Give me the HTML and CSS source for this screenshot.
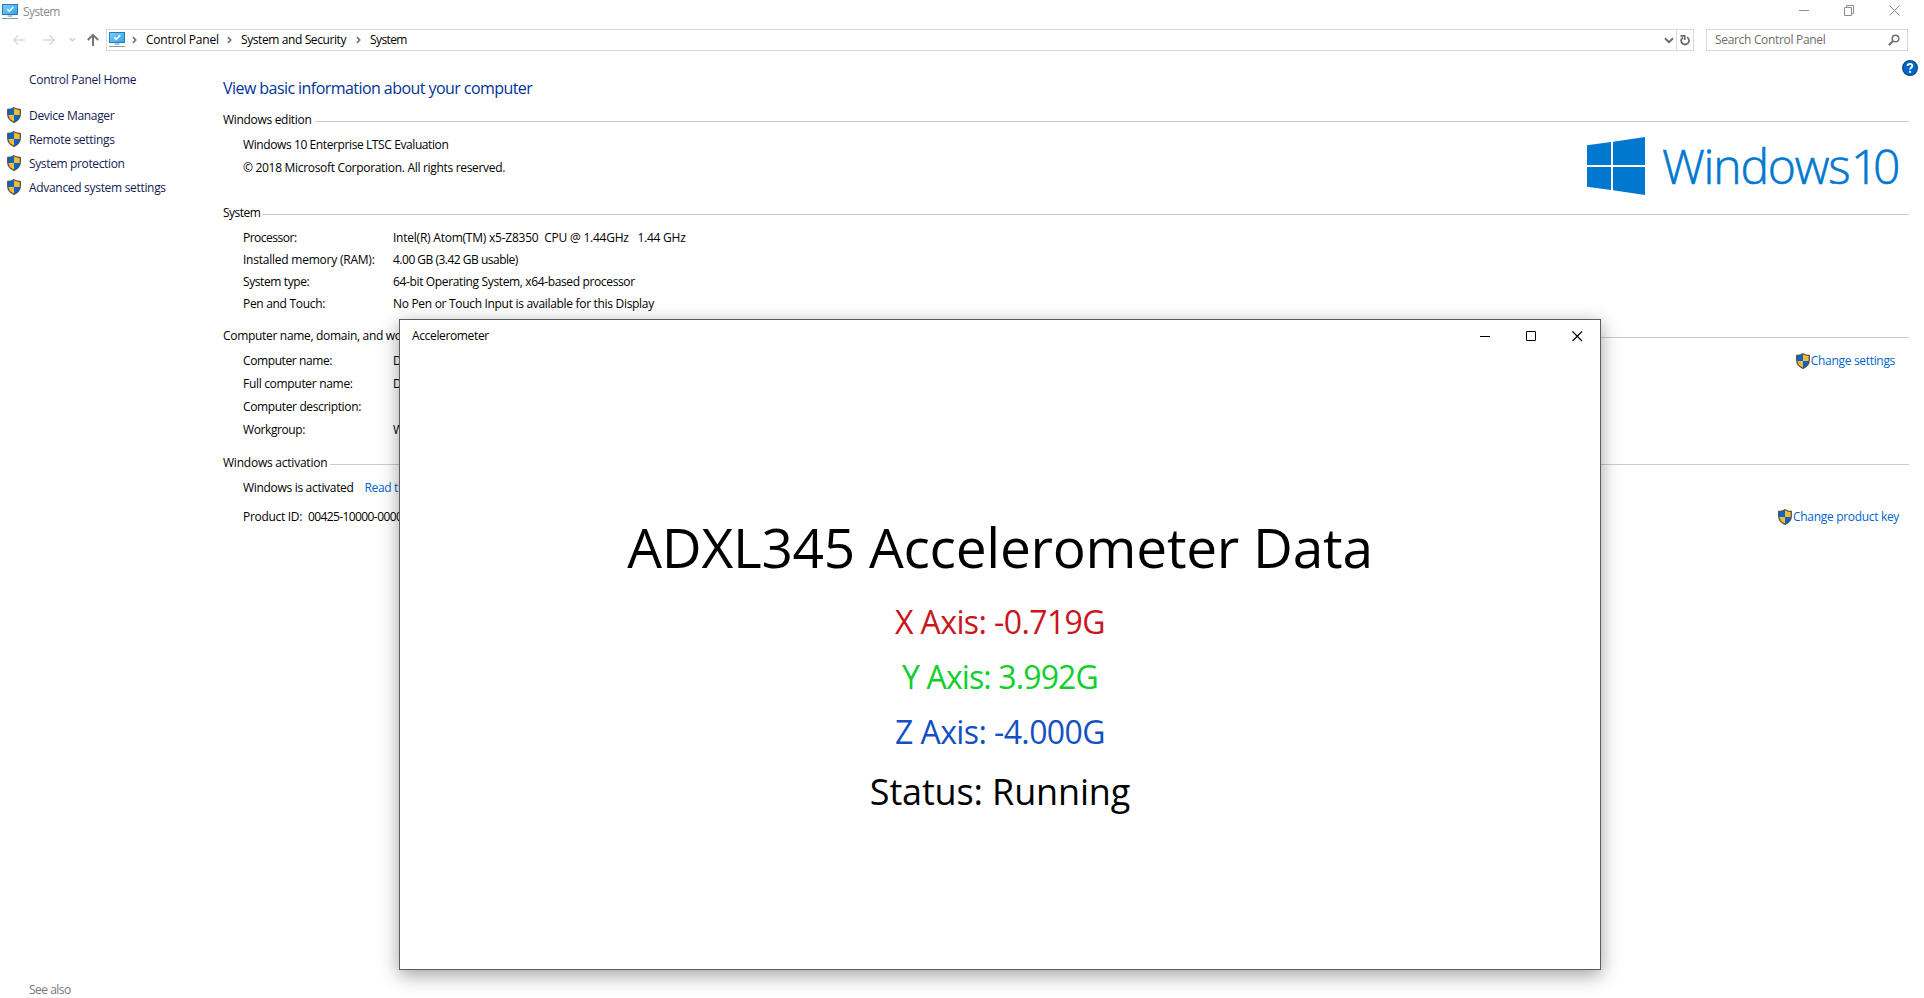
FILE: index.html
```html
<!DOCTYPE html>
<html lang="en">
<head>
<meta charset="utf-8">
<title>System</title>
<link rel="stylesheet" href="styles.css">
</head>
<body>
<svg class="defs" width="0" height="0" aria-hidden="true">
  <linearGradient id="sky" x1="0" y1="0" x2="1" y2="1"><stop offset="0" stop-color="#7fd0fb"/><stop offset="1" stop-color="#2aa3f0"/></linearGradient>
  <symbol id="monitor" viewBox="0 0 16 16">
    <rect x="0.5" y="0.5" width="15" height="10" fill="url(#sky)" stroke="#2a7bb8"/>
    <path d="M5.3 5.2l2 2.1 4-4.3" fill="none" stroke="#fff" stroke-width="1.5"/>
    <path d="M5.5 12h5M0 14.5h16" fill="none" stroke="#8799a8"/>
    <path d="M6 11h4v2H6z" fill="#b4c3cf"/>
  </symbol>
  <symbol id="shield" viewBox="0 0 14 16">
    <path d="M7 .6C5.2 1.900 3 2.400.7 2.500V7c0 4 2.300 6.700 6.300 8.500C11 13.700 13.300 11 13.300 7V2.500C11 2.400 8.800 1.900 7 .6z" fill="#ffb92e"/>
    <path d="M7 .6C5.200 1.900 3 2.400.7 2.500V8H7z" fill="#0067cc"/>
    <path d="M7 8h6.200c-.3 3.500-2.500 5.800-6.200 7.500z" fill="#0067cc"/>
    <path d="M7 .7C5.200 1.900 3 2.400.7 2.500V7c0 4 2.300 6.700 6.300 8.400C11 13.700 13.300 11 13.300 7V2.500C11 2.400 8.800 1.900 7 .7z" fill="none" stroke="#55544f" stroke-width="1.300"/>
  </symbol>
  <symbol id="sep" viewBox="0 0 5 8"><path d="M.8 1l3 3-3 3" fill="none" stroke="#6a6a6a" stroke-width="1.500"/></symbol>
</svg>

<div class="system">
  <header class="titlebar">
    <svg class="app-icon"><use href="#monitor"/></svg>
    <span class="title ls-6">System</span>
    <svg class="caption" width="101" height="11" viewBox="0 0 101 11" fill="none" stroke="#8e8e8e">
      <path d="M0 5.500h10M45.500 2.500h7v8h-7zM47.500 2.500v-2h7v8h-2"/>
      <path d="M90.500.5l10 10M100.500.5l-10 10"/>
    </svg>
  </header>

  <nav class="navbar">
    <svg class="nav-icons" width="88" height="14" viewBox="0 0 88 14" fill="none">
      <path d="M13 7H1.500M6.300 2.200L1.500 7l4.800 4.800M31 7h11.300M37.500 2.200L42.300 7l-4.800 4.800" stroke="#dcdcdc" stroke-width="1.500"/>
      <path d="M57.700 5l2.800 2.800L63.300 5" stroke="#d0d0d0" stroke-width="1.500"/>
      <path d="M81 13V1.800M75.800 7L81 1.800 86.200 7" stroke="#757575" stroke-width="2"/>
    </svg>
    <div class="address">
      <svg class="addr-icon"><use href="#monitor"/></svg>
      <svg class="sep"><use href="#sep"/></svg>
      <span class="crumb crumb-a ls-2">Control Panel</span>
      <svg class="sep"><use href="#sep"/></svg>
      <span class="crumb crumb-b ls-4">System and Security</span>
      <svg class="sep"><use href="#sep"/></svg>
      <span class="crumb ls-6">System</span>
      <svg class="drop" width="10" height="7" viewBox="0 0 10 7"><path d="M1 1.300l4 3.900 4-3.900" fill="none" stroke="#6c6c6c" stroke-width="2"/></svg>
      <span class="refresh"><svg width="10" height="12" viewBox="0 0 10 12"><path d="M7 3.200A3.900 3.900 0 1 1 2.800 3.400" fill="none" stroke="#6c6c6c" stroke-width="1.800"/><path d="M.5 1.900h4.200V6" fill="none" stroke="#6c6c6c" stroke-width="1.800"/></svg></span>
    </div>
    <div class="search">
      <span>Search Control Panel</span>
      <svg width="12" height="12" viewBox="0 0 12 12" fill="none" stroke="#707070"><circle cx="7.500" cy="4.500" r="3.300" stroke-width="1.500"/><path d="M5 7L.8 11.200" stroke-width="2"/></svg>
    </div>
  </nav>

  <div class="body">
    <aside class="side">
      <a class="home ls-3">Control Panel Home</a>
      <a class="task ls-3"><svg class="shield"><use href="#shield"/></svg>Device Manager</a>
      <a class="task ls-3"><svg class="shield"><use href="#shield"/></svg>Remote settings</a>
      <a class="task"><svg class="shield"><use href="#shield"/></svg>System protection</a>
      <a class="task ls-3"><svg class="shield"><use href="#shield"/></svg>Advanced system settings</a>
      <span class="see ls-5">See also</span>
    </aside>

    <main class="main">
      <h1>View basic information about your computer</h1>
      <section>
        <h2 class="ls-3">Windows edition</h2>
        <div class="edition">
          <div class="edition-text">
            <p class="ls-4">Windows 10 Enterprise LTSC Evaluation</p>
            <p class="ls-3">© 2018 Microsoft Corporation. All rights reserved.</p>
          </div>
          <div class="brand">
            <svg width="58" height="58" viewBox="0 0 58 58" fill="#0078d0"><path d="M0 8.200L24 5v23H0zM26 4.700L58 0v28H26zM0 30h24v23L0 49.800zM26 30h32v28l-32-4.700z"/></svg>
            <span class="brand-name">Windows</span><span class="brand-num">10</span>
          </div>
        </div>
      </section>
      <section>
        <h2 class="ls-5">System</h2>
        <dl class="rows tight">
          <dt class="ls-5">Processor:</dt><dd class="ls-2">Intel(R) Atom(TM) x5-Z8350&nbsp; CPU @ 1.44GHz &nbsp; 1.44 GHz</dd>
          <dt class="ls-2">Installed memory (RAM):</dt><dd class="ls-5">4.00 GB (3.42 GB usable)</dd>
          <dt class="ls-4">System type:</dt><dd>64-bit Operating System, x64-based processor</dd>
          <dt class="ls-3">Pen and Touch:</dt><dd class="ls-3">No Pen or Touch Input is available for this Display</dd>
        </dl>
      </section>
      <section>
        <h2 class="ls-3">Computer name, domain, and wo</h2>
        <div class="split">
          <dl class="rows">
            <dt class="ls-4">Computer name:</dt><dd>D</dd>
            <dt class="ls-3">Full computer name:</dt><dd>D</dd>
            <dt>Computer description:</dt><dd></dd>
            <dt class="ls-4">Workgroup:</dt><dd>W</dd>
          </dl>
          <a class="link change-settings"><svg class="shield"><use href="#shield"/></svg>Change settings</a>
        </div>
      </section>
      <section>
        <h2 class="ls-2">Windows activation</h2>
        <div class="activation"><span class="ls-3">Windows is activated</span><a class="link">Read th</a></div>
        <div class="product"><span class="ls-3">Product ID:</span><span class="pid">00425-10000-0000</span>
          <a class="link change-key"><svg class="shield"><use href="#shield"/></svg>Change product key</a></div>
      </section>
    </main>
  </div>
</div>

<svg class="help" width="16" height="16" viewBox="0 0 16 16"><circle cx="8" cy="8" r="7.400" fill="#0067cc" stroke="#0a4a8c" stroke-width="1.200"/><path d="M5.600 6C5.600 3.200 10.300 3.300 10.300 5.800 10.300 7.500 8.100 7.500 8.100 9.600" fill="none" stroke="#fff" stroke-width="1.900"/><path d="M7.100 10.800h2v2h-2z" fill="#fff"/></svg>

<div class="app">
  <div class="app-bar">
    <span>Accelerometer</span>
    <svg width="103" height="11" viewBox="0 0 103 11" fill="none" stroke="#000"><path d="M0 5.500h10M46.500.5h9v9h-9z"/><path d="M92.500.5l9.500 9.500M102 .5L92.500 10" stroke-width="1.100"/></svg>
  </div>
  <div class="readout">
    <div class="heading">ADXL345 Accelerometer Data</div>
    <div class="axis x">X Axis: -0.719G</div>
    <div class="axis y">Y Axis: 3.992G</div>
    <div class="axis z">Z Axis: -4.000G</div>
    <div class="status">Status: Running</div>
  </div>
</div>
</body>
</html>
```

FILE: styles.css
```css
* { box-sizing: border-box; }
html, body { height: 100%; }
body {
  margin: 0;
  overflow: hidden;
  background: #fff;
  color: #000;
  font: 12px/23px "Open Sans", "Noto Sans", sans-serif;
  letter-spacing: -0.36px;
}
h1, h2, p, dl, dd { margin: 0; font-weight: 400; }
svg { flex: none; display: block; }
span, a, p, dt, dd, h1, h2 { white-space: nowrap; }
.defs { position: absolute; }

.ls-2 { letter-spacing: -0.23px; }
.ls-3 { letter-spacing: -0.31px; }
.ls-4 { letter-spacing: -0.4px; }
.ls-5 { letter-spacing: -0.5px; }
.ls-6 { letter-spacing: -0.6px; }

.system { display: flex; flex-direction: column; height: 100%; }

.titlebar { display: flex; align-items: flex-start; height: 29px; padding: 0 24px 0 2px; }
.app-icon { width: 16px; height: 16px; margin-top: 4px; }
.title { margin-left: 5px; color: #8c8c8c; }
.caption { margin: 5px 0 0 auto; }

.navbar { display: flex; align-items: center; height: 22px; padding-left: 12px; }
.nav-icons { margin-right: 6px; }
.address {
  display: flex;
  align-items: center;
  width: 1588px;
  height: 22px;
  padding-left: 2px;
  border: 1px solid #d9d9d9;
}
.addr-icon { width: 16px; height: 16px; }
.sep { width: 5px; height: 8px; margin: 0 9px 0 7px; }
.crumb { line-height: 20px; }
.crumb + .sep { margin-left: 9px; margin-right: 9px; }
.crumb-a { width: 72px; }
.crumb-b { width: 106px; }
.drop { margin-left: auto; margin-right: 2px; }
.refresh {
  display: flex;
  align-items: center;
  justify-content: center;
  width: 17px;
  height: 20px;
  border-left: 1px solid #d9d9d9;
}
.search {
  display: flex;
  align-items: center;
  justify-content: space-between;
  width: 202px;
  height: 22px;
  margin-left: 12px;
  padding: 0 7px 0 8px;
  border: 1px solid #d9d9d9;
  color: #6d6d6d;
  line-height: 20px;
  letter-spacing: -0.32px;
}

.body { display: flex; flex: 1; min-height: 0; }
.side {
  display: flex;
  flex-direction: column;
  width: 223px;
  padding: 17px 0 0 29px;
  color: #151c55;
}
.home { margin-bottom: 12px; }
.task { display: flex; align-items: center; height: 24px; margin-left: -22px; }
.task .shield { margin-right: 8px; }
.shield { width: 14px; height: 16px; }
.see { margin-top: auto; height: 20px; color: #767676; }

.main { flex: 1; padding: 25px 15px 0 0; }
.main h1 {
  margin-bottom: 11px;
  color: #039;
  font-size: 16px;
  line-height: 24px;
  letter-spacing: -0.56px;
}
.main h2 { display: flex; align-items: center; font-size: 12px; line-height: 17px; }
.main h2::after {
  content: "";
  flex: 1;
  height: 1px;
  margin: 4px 0 0 3px;
  background: #ccc;
}
.edition { display: flex; justify-content: space-between; height: 76px; padding: 5px 10px 0 20px; }
.brand { display: flex; height: 58px; margin-top: 4px; color: #0078d0; -webkit-text-stroke: 0.6px #0078d0; }
.brand-name, .brand-num { font-size: 48px; font-weight: 300; line-height: 58px; }
.brand-name { width: 189px; margin-left: 17px; letter-spacing: -1.2px; }
.brand-num { width: 48px; letter-spacing: -5.500px; }

.rows { display: grid; grid-template-columns: 150px auto; justify-content: start; padding: 5px 0 13px 20px; }
.tight { row-gap: 1px; line-height: 21px; padding-top: 6px; }
.split { display: flex; justify-content: space-between; padding-right: 14px; }
.link { display: flex; align-items: center; height: 23px; color: #06c; }
.link .shield { margin-right: 1px; }
.change-settings { margin-top: 5px; }
.activation { display: flex; gap: 11px; padding: 5px 0 6px 20px; }
.product { display: flex; padding: 0 10px 0 20px; }
.pid { margin-left: 6px; letter-spacing: -0.6px; }
.change-key { margin-left: auto; }
.change-key, .change-settings { letter-spacing: -0.32px; }

.help { position: absolute; left: 1902px; top: 60px; }

.app {
  position: absolute;
  left: 399px;
  top: 319px;
  width: 1202px;
  height: 651px;
  border: 1px solid #5c5c5c;
  background: #fff;
  box-shadow: 0 5px 18px rgba(0, 0, 0, 0.38);
}
.app-bar {
  display: flex;
  align-items: flex-start;
  justify-content: space-between;
  height: 32px;
  padding: 4px 17px 0 12px;
}
.app-bar svg { margin-top: 7px; }
.readout { display: flex; flex-direction: column; align-items: center; padding-top: 156px; }
.heading { margin-bottom: 8px; font-size: 55px; line-height: 78px; letter-spacing: -0.26px; }
.axis { font-size: 32px; line-height: 55px; letter-spacing: -0.6px; }
.x { color: #c8161c; }
.y { color: #10cf2c; letter-spacing: -0.88px; }
.z { color: #1450c4; }
.status { margin-top: 2px; font-size: 36px; line-height: 62px; letter-spacing: -0.15px; }
```
